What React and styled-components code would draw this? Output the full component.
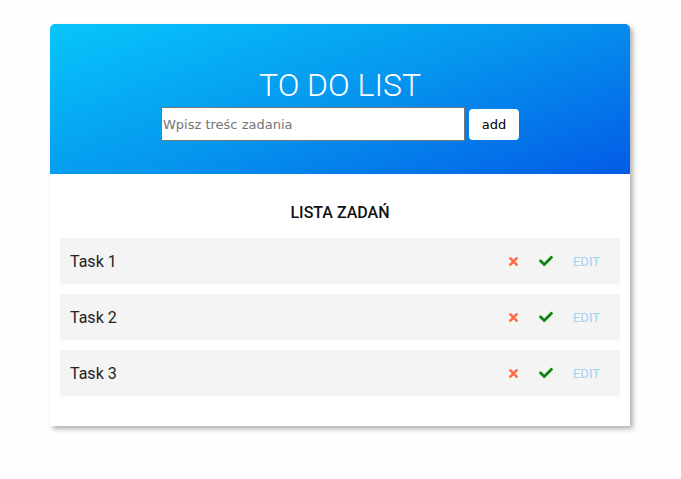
import React, { useState } from 'react';
import styled, { createGlobalStyle } from 'styled-components';
import { FaTimes, FaCheck } from 'react-icons/fa';

const GlobalStyle = createGlobalStyle`
  body {
    margin: 0;
    background: #fefefe;
    font-family: Roboto, "Liberation Sans", sans-serif;
  }
`;

const App = () => {
  const [tasks] = useState(['Task 1', 'Task 2', 'Task 3']);

  return (
    <>
      <GlobalStyle />
      <Page>
        <Card>
          <Header>
            <Title>TO DO LIST</Title>
            <Form onSubmit={e => e.preventDefault()}>
              <Input placeholder="Wpisz treśc zadania" />
              <AddButton type="submit">add</AddButton>
            </Form>
          </Header>
          <Body>
            <ListTitle>LISTA ZADAŃ</ListTitle>
            <List>
              {tasks.map(task => (
                <Row key={task}>
                  <TaskName>{task}</TaskName>
                  <Actions>
                    <IconButton color="#ff6a45"><FaTimes size={13} /></IconButton>
                    <IconButton color="#0a8a12"><FaCheck size={14} /></IconButton>
                    <EditButton>Edit</EditButton>
                  </Actions>
                </Row>
              ))}
            </List>
          </Body>
        </Card>
      </Page>
    </>
  );
};

export default App;

const Page = styled.div`
  padding: 24px 51px 40px 50px;
`;

const Card = styled.div`
  background: #fff;
  border-radius: 5px 5px 0 0;
  box-shadow: 3px 3px 5px rgba(0, 0, 0, 0.3);
`;

const Header = styled.header`
  height: 150px;
  box-sizing: border-box;
  padding-top: 42px;
  display: flex;
  flex-direction: column;
  align-items: center;
  border-radius: 5px 5px 0 0;
  background: linear-gradient(160deg, #07c6fb 0%, #0596ee 50%, #035be6 100%);
`;

const Title = styled.h1`
  margin: 0 0 3px;
  font-family: Roboto, sans-serif;
  font-weight: 300;
  font-size: 32px;
  line-height: 38px;
  color: #fff;
`;

const Form = styled.form`
  display: flex;
  align-items: center;
  gap: 4px;
`;

const Input = styled.input`
  width: 304px;
  height: 34px;
  box-sizing: border-box;
  border: 1px solid #767676;
  padding: 1px 1px;
  font-family: "DejaVu Sans", sans-serif;
  font-size: 13px;
  outline: none;
  &::placeholder {
    color: #757575;
  }
`;

const AddButton = styled.button`
  width: 50px;
  height: 31px;
  border: none;
  border-radius: 4px;
  background: #fff;
  font-family: "DejaVu Sans", sans-serif;
  font-size: 13px;
  color: #000;
  cursor: pointer;
`;

const Body = styled.section`
  padding: 24px 10px 30px;
`;

const ListTitle = styled.h2`
  margin: 0 0 10px;
  text-align: center;
  font-family: Roboto, sans-serif;
  font-weight: 500;
  font-size: 16px;
  line-height: 30px;
  color: #111;
`;

const List = styled.ul`
  list-style: none;
  margin: 0;
  padding: 0;
  display: flex;
  flex-direction: column;
  gap: 10px;
`;

const Row = styled.li`
  height: 46px;
  display: flex;
  align-items: center;
  justify-content: space-between;
  padding: 0 20px 0 10px;
  background: #f4f4f4;
`;

const TaskName = styled.span`
  font-family: Roboto, sans-serif;
  font-size: 16px;
  color: #222;
`;

const Actions = styled.div`
  display: flex;
  align-items: center;
  gap: 14px;
`;

const IconButton = styled.button`
  display: flex;
  align-items: center;
  justify-content: center;
  width: 18px;
  padding: 0;
  border: none;
  background: none;
  color: ${p => p.color};
  cursor: pointer;
`;

const EditButton = styled.button`
  margin-left: 4px;
  padding: 0;
  border: none;
  background: none;
  font-family: Roboto, sans-serif;
  font-size: 13px;
  text-transform: uppercase;
  color: #a3d2f2;
  cursor: pointer;
`;
